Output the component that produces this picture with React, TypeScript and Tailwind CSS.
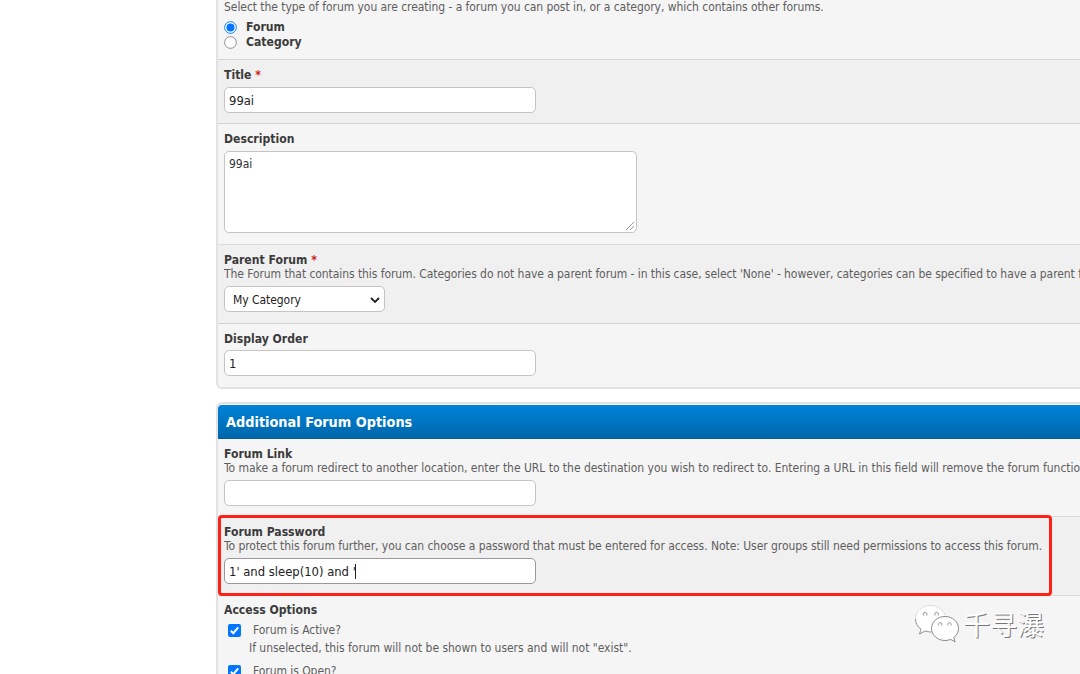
import type { ReactNode } from "react";

function Label({ children, required }: { children: ReactNode; required?: boolean }) {
  return (
    <div className="h-[15px] text-[12.1px] leading-[17px] font-bold text-[#3b3b3b]">
      {children}
      {required && <span className="text-[#d02020]"> *</span>}
    </div>
  );
}

function Hint({ children, className = "tracking-[-0.055px]" }: { children: ReactNode; className?: string }) {
  return <div className={`h-[15px] text-[12px] leading-[15px] text-[#5e5e5e] ${className}`}>{children}</div>;
}

function TextBox({ children, focused }: { children?: ReactNode; focused?: boolean }) {
  return (
    <div
      className={`flex h-[26px] w-[312px] items-center rounded-[5px] border bg-white pt-px pl-1 text-[12.9px] text-[#222] ${
        focused ? "border-[#999]" : "border-[#c4c4c4]"
      }`}
    >
      {children}
    </div>
  );
}

function Check() {
  return (
    <svg className="h-[13px] w-[13px] shrink-0" viewBox="0 0 13 13">
      <rect width="13" height="13" rx="2" fill="#0075ff" />
      <path d="M2.8 6.8 5.3 9.2 10.2 3.4" fill="none" stroke="#fff" strokeWidth="2" />
    </svg>
  );
}

function Radio({ checked }: { checked?: boolean }) {
  return (
    <svg className="h-[13px] w-[13px] shrink-0" viewBox="0 0 14 14">
      <circle cx="7" cy="7" r="6.3" fill="#fff" stroke={checked ? "#0075ff" : "#858585"} strokeWidth="1" />
      {checked && <circle cx="7" cy="7" r="4.3" fill="#0075ff" />}
    </svg>
  );
}

function WeChat() {
  return (
    <svg className="h-[40px] w-[46px]" viewBox="0 0 46 40">
      <path
        d="M16.5 1.5C8 1.5 1.5 7.5 1.5 15c0 4.3 2 7.8 5.5 10.2L5.5 30l5.5-3c2 .7 4 1 6.5 1L31 12.5C29.5 6 23.5 1.5 16.5 1.5Z"
        fill="#fff"
      />
      <path d="M1.5 15c0 4.3 2 7.8 5.5 10.2L5.5 30l5.5-3c2 .7 4 1 6.5 1" fill="none" stroke="#858585" strokeWidth=".9" />
      <path d="M1.5 15C1.5 7.5 8 1.5 16.5 1.5c7 0 12.5 4 14.5 9.5" fill="none" stroke="#d0d0d0" strokeWidth=".7" />
      <path
        d="M31 12.5c-7.8 0-13.5 5.5-13.5 12S23.5 36.5 31 36.5c2 0 4-.4 5.8-1.1L41 38l-1.2-4.5c3-2.3 4.7-5.3 4.7-9 0-6.5-5.8-12-13.5-12Z"
        fill="#fff"
        stroke="#7e7e7e"
        strokeWidth=".9"
      />
      <g fill="#fff" stroke="#888" strokeWidth=".9">
        <path d="M9.5 11.5a1.9 2.1 0 1 1 3.2 0" />
        <path d="M21 11.5a1.9 2.1 0 1 1 3.2 0" />
        <path d="M24.8 21.5a1.7 1.9 0 1 1 2.9 0" />
        <path d="M34 21.5a1.7 1.9 0 1 1 2.9 0" />
      </g>
    </svg>
  );
}

export default function App() {
  return (
    <div className="relative h-[674px] w-[1080px] overflow-hidden bg-white pl-[216px] font-['DejaVu_Sans_Condensed','DejaVu_Sans',sans-serif] whitespace-nowrap [font-stretch:condensed]">
      <section className="h-[389px] w-[900px] rounded-b-[6px] border-2 border-t-0 border-[#e2e2e2] bg-[#f5f5f5]">
        <div className="h-[60px] border-b border-[#d4d4d4] pl-1.5">
          <Hint>Select the type of forum you are creating - a forum you can post in, or a category, which contains other forums.</Hint>
          <div className="mt-1 flex h-[15px] items-end gap-[9px]">
            <Radio checked />
            <Label>Forum</Label>
          </div>
          <div className="flex h-[15px] items-end gap-[9px]">
            <Radio />
            <Label>Category</Label>
          </div>
        </div>
        <div className="h-16 border-b border-[#d4d4d4] bg-[#f0f0f0] pt-[7px] pl-1.5">
          <Label required>Title</Label>
          <div className="mt-[5px]">
            <TextBox>99ai</TextBox>
          </div>
        </div>
        <div className="h-[121px] border-b border-[#dcdcdc] pt-[7px] pl-1.5">
          <Label>Description</Label>
          <div className="mt-[5px] flex h-[82px] w-[413px] justify-between rounded-[5px] border border-[#c4c4c4] bg-white pt-1 pl-1 text-[12px] leading-4 text-[#333]">
            99ai
            <svg className="mr-[1px] mb-[1px] h-[10px] w-[10px] self-end" viewBox="0 0 10 10">
              <path d="M1 9 9 1M5 9 9 5" stroke="#999" />
            </svg>
          </div>
        </div>
        <div className="h-[79px] border-b border-[#d0d0d0] bg-[#f0f0f0] pt-[7px] pl-1.5">
          <Label required>Parent Forum</Label>
          <Hint className="tracking-[-0.07px]">
            The Forum that contains this forum. Categories do not have a parent forum - in this case, select 'None' - however, categories can be specified to have a parent forum.
          </Hint>
          <div className="mt-1 flex h-[26px] w-[161px] items-center justify-between rounded-[5px] border border-[#c4c4c4] bg-white pt-px pr-1 pl-2 text-[12px] tracking-[-0.05px] text-[#222]">
            My Category
            <svg className="h-[6px] w-[10px]" viewBox="0 0 10 6">
              <path d="M1 1 5 5 9 1" fill="none" stroke="#222" strokeWidth="1.8" />
            </svg>
          </div>
        </div>
        <div className="pt-[7px] pl-1.5">
          <Label>Display Order</Label>
          <div className="mt-1">
            <TextBox>1</TextBox>
          </div>
        </div>
      </section>

      <section className="mt-[13px] h-[300px] w-[900px] rounded-t-[6px] border-2 border-[#e2e2e2] bg-[#f5f5f5]">
        <h2 className="mt-px h-[34px] rounded-t-[4px] border-b border-[#0a5a8e] bg-linear-to-b from-[#0083d9] to-[#0067ab] pl-2 text-[14.35px] leading-[34px] font-bold text-white">
          Additional Forum Options
        </h2>
        <div className="h-[78px] border-b border-[#dcdcdc] pt-[7px] pl-1.5">
          <Label>Forum Link</Label>
          <Hint className="tracking-[-0.025px]">
            To make a forum redirect to another location, enter the URL to the destination you wish to redirect to. Entering a URL in this field will remove the forum functionality
          </Hint>
          <div className="mt-1">
            <TextBox />
          </div>
        </div>
        <div className="h-[79px] border-b border-[#dcdcdc] bg-[#f0f0f0] pt-[7px] pl-1.5">
          <Label>Forum Password</Label>
          <Hint>To protect this forum further, you can choose a password that must be entered for access. Note: User groups still need permissions to access this forum.</Hint>
          <div className="mt-1">
            <TextBox focused>
              1' and sleep(10) and '<span className="-ml-px h-[15px] w-px bg-[#222]" />
            </TextBox>
          </div>
        </div>
        <div className="pt-[6px] pl-1.5">
          <Label>Access Options</Label>
          <div className="mt-[6px] ml-1 flex h-[15px] items-center gap-3">
            <Check />
            <Hint>Forum is Active?</Hint>
          </div>
          <div className="mt-[3px] ml-[25px]">
            <Hint className="tracking-[-0.03px]">If unselected, this forum will not be shown to users and will not "exist".</Hint>
          </div>
          <div className="mt-[8px] ml-1 flex h-[15px] items-center gap-3">
            <Check />
            <Hint>Forum is Open?</Hint>
          </div>
        </div>
      </section>

      <div className="absolute top-[515px] left-[218px] h-[81px] w-[834px] rounded-[4px] border-3 border-[#ff2118]" />
      <div className="absolute top-[603px] left-[914px] flex items-center gap-[3px]">
        <WeChat />
        <span className="font-['Noto_Sans_CJK_SC',sans-serif] text-[27px] leading-[42px] font-normal text-white [text-shadow:1px_1px_0_#777]">千寻瀑</span>
      </div>
    </div>
  );
}
